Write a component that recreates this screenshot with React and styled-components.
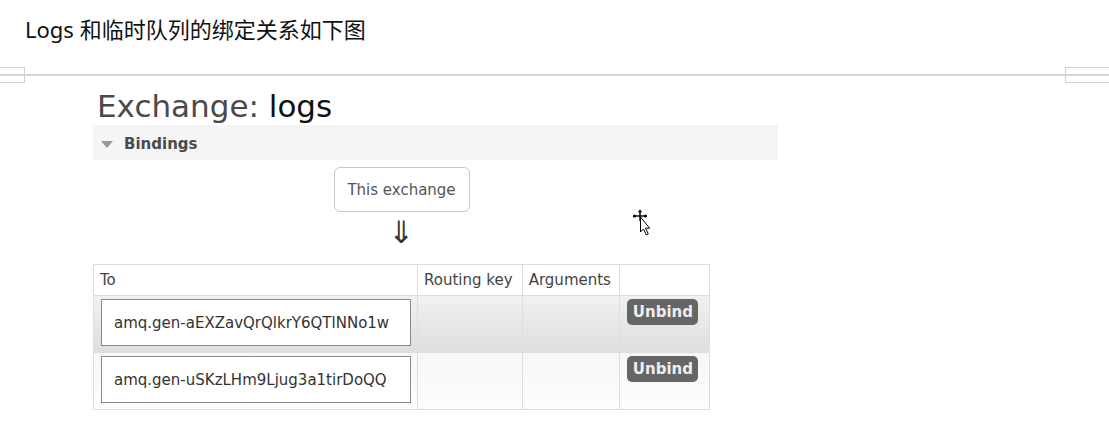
import React from "react";
import styled, { createGlobalStyle } from "styled-components";

const GlobalStyle = createGlobalStyle`
  html, body {
    margin: 0;
    padding: 0;
    background: #fff;
  }
  body {
    font-family: "DejaVu Sans", Verdana, sans-serif;
  }
`;

const Page = styled.div`
  position: relative;
  width: 1109px;
  height: 426px;
  overflow: hidden;
`;

const Title = styled.h2`
  margin: 0;
  padding: 14px 0 0 25px;
  font-family: "Noto Sans", "Noto Sans CJK SC", sans-serif;
  font-size: 22px;
  font-weight: normal;
  line-height: 30px;
  color: #111;
`;

const Divider = styled.div`
  position: relative;
  height: 16px;
  margin-top: 23px;

  &::before {
    content: "";
    position: absolute;
    left: 0;
    right: 0;
    top: 7px;
    border-top: 2px solid #d4d4d4;
  }
`;

const Handle = styled.span`
  position: absolute;
  top: 0;
  ${(p) => (p.$side === "left" ? "left: -1px; width: 24px;" : "right: -2px; width: 44px;")}
  height: 14px;
  border: 1px solid #d0d0d0;
`;

const Panel = styled.section`
  margin-left: 93px;
  width: 685px;
`;

const Heading = styled.h1`
  margin: 5px 0 1px 4px;
  font-size: 31px;
  font-weight: normal;
  line-height: 36px;
  color: #4a4a4a;
`;

const Name = styled.span`
  color: #111;
`;

const SectionBar = styled.div`
  box-sizing: border-box;
  display: flex;
  align-items: center;
  gap: 11px;
  height: 35px;
  padding: 3px 0 0 8px;
  background: #f5f5f5;
  font-size: 15px;
  font-weight: bold;
  color: #4a4a4a;
`;

const Caret = styled.span`
  width: 0;
  height: 0;
  border-left: 6px solid transparent;
  border-right: 6px solid transparent;
  border-top: 7px solid #9a9a9a;
  margin-top: 1px;
`;

const Body = styled.div`
  width: 617px;
  display: flex;
  flex-direction: column;
  align-items: center;
  padding-top: 7px;
`;

const SourceBox = styled.div`
  box-sizing: border-box;
  width: 136px;
  height: 45px;
  border: 1px solid #c8c8c8;
  border-radius: 6px;
  display: flex;
  align-items: center;
  justify-content: center;
  font-size: 15px;
  color: #555;
`;

const Arrow = styled.div`
  height: 52px;
  line-height: 40px;
  font-size: 31px;
  color: #333;
`;

const Table = styled.table`
  width: 617px;
  border-collapse: collapse;
  font-size: 15px;
  color: #444;
`;

const Th = styled.th`
  box-sizing: border-box;
  width: ${(p) => p.$w}px;
  height: 31px;
  padding: 0 6px;
  border: 1px solid #dedede;
  text-align: left;
  font-weight: normal;
  white-space: nowrap;
`;

const Row = styled.tr`
  background: ${(p) =>
    p.$shade
      ? "linear-gradient(#f1f1f1, #dedede)"
      : "linear-gradient(#f7f7f7, #fdfdfd)"};
`;

const Td = styled.td`
  height: 57px;
  padding: 3px 6px 0 7px;
  border: 1px solid #dedede;
  vertical-align: top;
  box-sizing: border-box;
`;

const QueueBox = styled.div`
  box-sizing: border-box;
  width: 310px;
  height: 47px;
  display: flex;
  align-items: center;
  padding-left: 12px;
  background: #fff;
  border: 1px solid #8a8a8a;
  color: #333;
  white-space: nowrap;
`;

const UnbindButton = styled.button`
  width: 71px;
  height: 26px;
  margin-top: 0;
  padding: 0;
  border: none;
  border-radius: 5px;
  background: #666;
  color: #eee;
  font-family: "DejaVu Sans", Verdana, sans-serif;
  font-size: 15px;
  font-weight: bold;
`;

const Cursor = styled.svg`
  position: absolute;
  left: 632px;
  top: 209px;
`;

const bindings = [
  "amq.gen-aEXZavQrQlkrY6QTlNNo1w",
  "amq.gen-uSKzLHm9Ljug3a1tirDoQQ",
];

export default function App() {
  return (
    <Page>
      <GlobalStyle />
      <Title>Logs 和临时队列的绑定关系如下图</Title>
      <Divider>
        <Handle $side="left" />
        <Handle $side="right" />
      </Divider>
      <Panel>
        <Heading>
          Exchange: <Name>logs</Name>
        </Heading>
        <SectionBar>
          <Caret />
          Bindings
        </SectionBar>
        <Body>
          <SourceBox>This exchange</SourceBox>
          <Arrow>⇓</Arrow>
          <Table>
            <thead>
              <tr>
                <Th $w={324}>To</Th>
                <Th $w={105}>Routing key</Th>
                <Th $w={98}>Arguments</Th>
                <Th $w={90}></Th>
              </tr>
            </thead>
            <tbody>
              {bindings.map((q, i) => (
                <Row key={q} $shade={i === 0}>
                  <Td>
                    <QueueBox>{q}</QueueBox>
                  </Td>
                  <Td />
                  <Td />
                  <Td>
                    <UnbindButton>Unbind</UnbindButton>
                  </Td>
                </Row>
              ))}
            </tbody>
          </Table>
        </Body>
      </Panel>
      <Cursor width="22" height="30" viewBox="0 0 22 30">
        <g stroke="#000" strokeWidth="1.4" fill="none">
          <line x1="8" y1="2" x2="8" y2="12" />
          <line x1="2.5" y1="7" x2="13.5" y2="7" />
        </g>
        <path d="M8 0.5 L5.8 3.2 L10.2 3.2 Z" fill="#000" />
        <circle cx="2.5" cy="7" r="1.6" fill="#000" />
        <circle cx="13.5" cy="7" r="1.6" fill="#000" />
        <path
          d="M8.5 8 L8.5 23 L11.5 20 L14.3 26 L16.3 25 L13.6 19.2 L17.6 19.2 Z"
          fill="#fff"
          stroke="#000"
          strokeWidth="1"
          strokeLinejoin="round"
        />
      </Cursor>
    </Page>
  );
}
